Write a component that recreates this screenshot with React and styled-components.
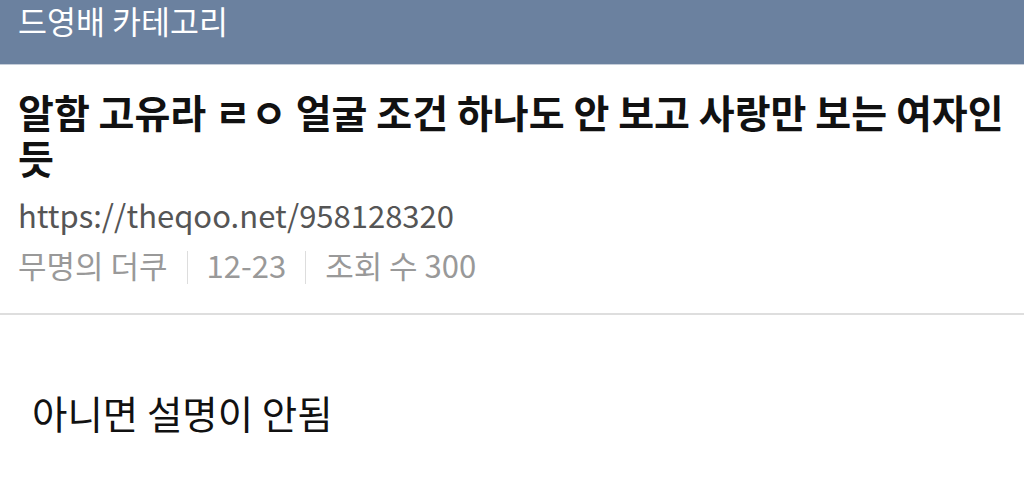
import React from "react";
import styled, { createGlobalStyle } from "styled-components";

const Global = createGlobalStyle`
  html, body { margin: 0; padding: 0; background: #fff; }
  body { font-family: "Noto Sans CJK KR", "Noto Sans", sans-serif; }
`;

const Page = styled.div`
  width: 1024px;
  display: flex;
  flex-direction: column;
`;

const TopBar = styled.header`
  height: 65px;
  background: #6b819f;
  border-bottom: 1px solid #c5cdd9;
  display: flex;
  align-items: flex-start;
  padding: 0 18px;
  box-sizing: border-box;
`;

const TopTitle = styled.div`
  color: #fff;
  font-size: 31.5px;
  line-height: 40px;
`;

const Head = styled.section`
  padding: 23px 18px 28px;
  border-bottom: 2px solid #dedede;
  display: flex;
  flex-direction: column;
`;

const Title = styled.h1`
  margin: 0;
  font-size: 39px;
  font-weight: 700;
  line-height: 46px;
  color: #111;
`;

const Url = styled.div`
  margin-top: 15px;
  font-size: 31px;
  line-height: 40px;
  color: #555;
`;

const Meta = styled.div`
  margin-top: 10px;
  display: flex;
  align-items: center;
  font-size: 31px;
  line-height: 40px;
  color: #999;
`;

const Sep = styled.span`
  width: 1px;
  height: 33px;
  margin: 4px 19px 0;
  background: #ddd;
`;

const Body = styled.article`
  padding: 74px 32px 0;
  font-size: 38.5px;
  line-height: 46px;
  color: #111;
`;

export default function App() {
  return (
    <Page>
      <Global />
      <TopBar>
        <TopTitle>드영배 카테고리</TopTitle>
      </TopBar>
      <Head>
        <Title>알함 고유라 ㄹㅇ 얼굴 조건 하나도 안 보고 사랑만 보는 여자인 듯</Title>
        <Url>https://theqoo.net/958128320</Url>
        <Meta>
          <span>무명의 더쿠</span>
          <Sep />
          <span>12-23</span>
          <Sep />
          <span>조회 수 300</span>
        </Meta>
      </Head>
      <Body>아니면 설명이 안됨</Body>
    </Page>
  );
}
